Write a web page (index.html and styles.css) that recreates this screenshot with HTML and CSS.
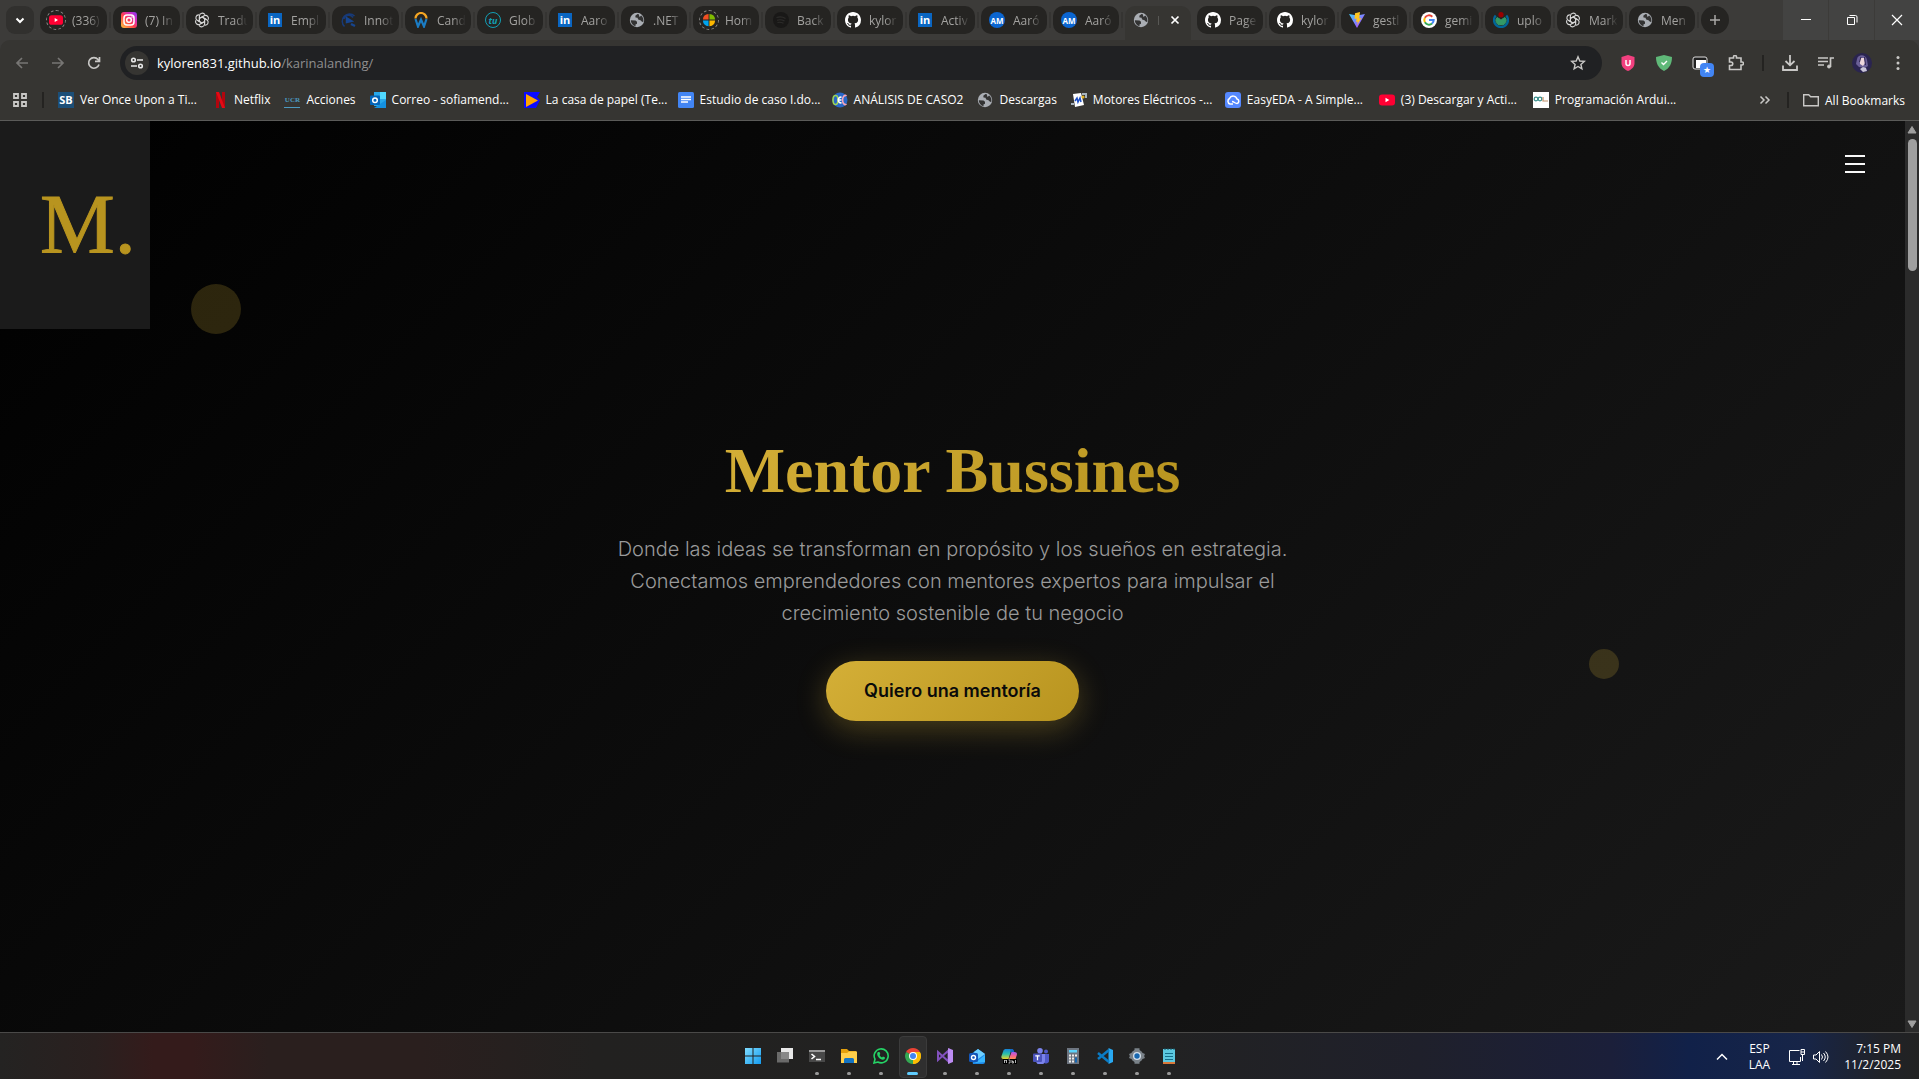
FILE: index.html
```
<!DOCTYPE html>
<html lang="es">
<head>
    <meta charset="UTF-8">
    <meta name="viewport" content="width=device-width, initial-scale=1.0">
    <title>Mentor Bussines</title>
    <link rel="stylesheet" href="styles.css">
</head>
<body>
    <!-- Shared icons -->
    <svg class="sprite" aria-hidden="true">
        <symbol id="i-globe" viewBox="0 0 16 16"><circle cx="8" cy="8" r="7.200" fill="#a9adb3"/><path d="M1.800 8.200l4.700.3 1.500 1.300v2l-1.500.7v1.800C3.800 13.500 1.800 11 1.800 8.200zM8.500 2L6.300 3.800l.2 1.700 2 .3.7 1.700 2.300.8 1.500 1.500 1.200.2c.7-2.500-.2-5-2-6.500L10.500 5 9.800 2.300z" fill="#333"/></symbol>
        <symbol id="i-github" viewBox="0 0 16 16"><path fill="#fff" d="M8 0C3.580 0 0 3.580 0 8c0 3.540 2.290 6.530 5.470 7.590.4.070.55-.17.55-.38v-1.490c-2.010.37-2.530-.49-2.690-.94-.09-.23-.48-.94-.82-1.130-.28-.15-.68-.52-.01-.53.63-.01 1.080.58 1.230.82.72 1.210 1.870.87 2.330.66.070-.52.28-.87.51-1.070-1.780-.2-3.640-.89-3.640-3.950 0-.87.310-1.590.82-2.150-.08-.2-.36-1.020.08-2.120 0 0 .67-.21 2.200.82a7.600 7.600 0 0 1 4 0c1.530-1.040 2.200-.82 2.200-.82.44 1.100.16 1.920.08 2.120.51.56.82 1.270.82 2.150 0 3.070-1.870 3.750-3.650 3.950.29.25.54.73.54 1.480v2.200c0 .21.150.46.55.38A8 8 0 0 0 16 8c0-4.420-3.580-8-8-8z"/></symbol>
        <symbol id="i-gpt" viewBox="0 0 16 16"><g fill="none" stroke="#d8d8d8" stroke-width="1.100"><path id="petal" d="M5.400 8.500V4a2.900 2.900 0 0 1 5.500-1.200M5.400 6.500l4-2.300"/><path d="M5.400 8.500V4a2.900 2.900 0 0 1 5.500-1.200M5.400 6.500l4-2.300" transform="rotate(60 8 8)"/><path d="M5.400 8.500V4a2.900 2.900 0 0 1 5.500-1.200M5.400 6.500l4-2.300" transform="rotate(120 8 8)"/><path d="M5.400 8.500V4a2.900 2.900 0 0 1 5.500-1.200M5.400 6.500l4-2.300" transform="rotate(180 8 8)"/><path d="M5.400 8.500V4a2.900 2.900 0 0 1 5.500-1.200M5.400 6.500l4-2.300" transform="rotate(240 8 8)"/><path d="M5.400 8.500V4a2.900 2.900 0 0 1 5.500-1.200M5.400 6.500l4-2.300" transform="rotate(300 8 8)"/></g></symbol>
        <symbol id="i-youtube" viewBox="0 0 16 16"><rect y="2.500" width="16" height="11" rx="3" fill="#ff0033"/><path d="M6.500 5.800v4.400L10.300 8z" fill="#fff"/></symbol>
    </svg>

    <header class="browser">
        <div class="tab-strip">
            <button class="tab-search" aria-label="Search tabs"><svg width="16" height="16" viewBox="0 0 16 16"><path d="M4.500 6.500L8 10l3.500-3.500" fill="none" stroke="#fff" stroke-width="2"/></svg></button>
            <div class="tabs">
                <button class="tab"><span class="fav ring"><svg><use href="#i-youtube"/></svg></span><span class="tab-title">(336)</span></button>
                <button class="tab"><span class="fav fav-insta"><svg viewBox="0 0 16 16"><g fill="none" stroke="#fff" stroke-width="1.500"><rect x="3" y="3" width="10" height="10" rx="3"/><circle cx="8" cy="8" r="2.300"/></g><circle cx="11" cy="5" r=".8" fill="#fff"/></svg></span><span class="tab-title">(7) In</span></button>
                <button class="tab"><span class="fav"><svg><use href="#i-gpt"/></svg></span><span class="tab-title">Tradu</span></button>
                <button class="tab"><span class="fav fav-in">in</span><span class="tab-title">Empl</span></button>
                <button class="tab"><span class="fav"><svg viewBox="0 0 16 16"><path d="M14.500 4A7 7 0 1 0 4.500 14.500M13 5.500A5 5 0 0 0 4 7" fill="none" stroke="#173a78" stroke-width="1.500"/><path d="M7 6.500l4 2.500-4 1zM11 12l4 2" fill="none" stroke="#17458e" stroke-width="2.500"/></svg></span><span class="tab-title">Innot</span></button>
                <button class="tab"><span class="fav"><svg viewBox="0 0 16 16"><path d="M2.500 6.500a5.500 5.500 0 0 1 11 0" fill="none" stroke="#f5a623" stroke-width="2.200"/><path d="M2.500 7l2.500 7.500 3-7 3 7L13.500 7" fill="none" stroke="#1b7cc4" stroke-width="2.200"/></svg></span><span class="tab-title">Cand</span></button>
                <button class="tab"><span class="fav fav-tu">tu</span><span class="tab-title">Glob</span></button>
                <button class="tab"><span class="fav fav-in">in</span><span class="tab-title">Aaro</span></button>
                <button class="tab"><span class="fav"><svg><use href="#i-globe"/></svg></span><span class="tab-title">.NET</span></button>
                <button class="tab"><span class="fav ring"><svg viewBox="0 0 16 16"><path d="M7.500 1v6.500H1A7 7 0 0 1 7.500 1z" fill="#f25022"/><path d="M8.500 1v6.500H15A7 7 0 0 0 8.500 1z" fill="#7fba00"/><path d="M7.500 15V8.500H1A7 7 0 0 0 7.500 15z" fill="#00a4ef"/><path d="M8.500 15V8.500H15A7 7 0 0 1 8.500 15z" fill="#ffb900"/></svg></span><span class="tab-title">Hom</span></button>
                <button class="tab"><span class="fav"><svg viewBox="0 0 16 16"><circle cx="8" cy="8" r="8" fill="#191817"/><path d="M3.500 5.500q5-1.500 9 1M4 8.200q4-1.200 7.500.8M4.500 10.500q3-.8 6 .8" fill="none" stroke="#2d2c2a" stroke-width="1.200"/></svg></span><span class="tab-title">Back</span></button>
                <button class="tab"><span class="fav"><svg><use href="#i-github"/></svg></span><span class="tab-title">kylor</span></button>
                <button class="tab"><span class="fav fav-in">in</span><span class="tab-title">Activ</span></button>
                <button class="tab"><span class="fav fav-am">AM</span><span class="tab-title">Aaró</span></button>
                <button class="tab"><span class="fav fav-am">AM</span><span class="tab-title">Aaró</span></button>
                <div class="tab active"><span class="fav"><svg><use href="#i-globe"/></svg></span><span class="tab-title">M</span><button class="tab-close" aria-label="Close tab"><svg width="16" height="16" viewBox="0 0 16 16"><path d="M4.500 4.500l7 7M11.500 4.500l-7 7" stroke="#fff" stroke-width="1.700"/></svg></button></div>
                <button class="tab"><span class="fav"><svg><use href="#i-github"/></svg></span><span class="tab-title">Page</span></button>
                <button class="tab"><span class="fav"><svg><use href="#i-github"/></svg></span><span class="tab-title">kylor</span></button>
                <button class="tab"><span class="fav"><svg viewBox="0 0 16 16"><defs><linearGradient id="vite" x1="0" y1="0" x2="1" y2="1"><stop stop-color="#41d1ff"/><stop offset="1" stop-color="#bd34fe"/></linearGradient></defs><path d="M0 2l8 14 8-14-8 1.500z" fill="url(#vite)"/><path d="M11 0L6 1.200 5.500 7l2.200-.5L7 10l1.800-.6L8 13l4.500-7-2.300.5z" fill="#ffc620"/></svg></span><span class="tab-title">gestl</span></button>
                <button class="tab"><span class="fav"><svg viewBox="0 0 16 16"><circle cx="8" cy="8" r="8" fill="#fff"/><g fill="none" stroke-width="2"><path d="M11.300 4.700A4.700 4.700 0 0 0 3.900 5.700" stroke="#ea4335"/><path d="M3.900 5.700a4.700 4.700 0 0 0 0 4.600" stroke="#fbbc05"/><path d="M3.900 10.300a4.700 4.700 0 0 0 7.100 1.300" stroke="#34a853"/><path d="M11 11.600A4.700 4.700 0 0 0 12.700 8H8" stroke="#4285f4"/></g></svg></span><span class="tab-title">gemi</span></button>
                <button class="tab"><span class="fav"><svg viewBox="0 0 16 16"><path d="M2.700 3.500a7 7 0 1 0 10.600 0" fill="none" stroke="#069" stroke-width="2.300"/><path d="M4 5.500l3.500 2v5.500A4.500 4.500 0 0 1 4 5.500zM12 5.500l-3.500 2v5.500A4.500 4.500 0 0 0 12 5.500z" fill="#396" stroke="#396"/><circle cx="8" cy="2.700" r="2.600" fill="#900"/></svg></span><span class="tab-title">uplo</span></button>
                <button class="tab"><span class="fav"><svg><use href="#i-gpt"/></svg></span><span class="tab-title">Mark</span></button>
                <button class="tab"><span class="fav"><svg><use href="#i-globe"/></svg></span><span class="tab-title">Men</span></button>
            </div>
            <button class="new-tab" aria-label="New tab"><svg width="16" height="16" viewBox="0 0 16 16"><path d="M8 3v10M3 8h10" stroke="#a9a8a6" stroke-width="1.500"/></svg></button>
            <div class="window-controls">
                <button aria-label="Minimize"><svg viewBox="0 0 12 12"><path d="M1 5.500h10" stroke="#fff"/></svg></button>
                <button aria-label="Restore"><svg viewBox="0 0 12 12"><path d="M3.500 1.500h6a1.500 1.500 0 0 1 1.500 1.500v5.500M1.500 3.500h7v7h-7z" fill="none" stroke="#fff"/></svg></button>
                <button aria-label="Close"><svg viewBox="0 0 12 12"><path d="M1 1l10 10M11 1L1 11" stroke="#fff" stroke-width="1.200"/></svg></button>
            </div>
        </div>

        <div class="toolbar">
            <button class="tool dim" aria-label="Back"><svg viewBox="0 0 16 16"><path d="M14 8H3M8 3L3 8l5 5" stroke-width="1.700"/></svg></button>
            <button class="tool dim" aria-label="Forward"><svg viewBox="0 0 16 16"><path d="M2 8h11M8 3l5 5-5 5" stroke-width="1.700"/></svg></button>
            <button class="tool" aria-label="Reload"><svg viewBox="0 0 16 16"><path d="M13 9.500A5.300 5.300 0 1 1 12 4.500l1.300 1.300M13.500 2v4.300H9" stroke-width="1.700"/></svg></button>
            <div class="omnibox">
                <button class="site-info" aria-label="Site information"><svg width="14" height="14" viewBox="0 0 14 14"><g fill="none" stroke="#e8e8e8" stroke-width="1.600"><circle cx="3.500" cy="4" r="1.800"/><path d="M7 4h6M1 10h6"/><circle cx="10.500" cy="10" r="1.800"/></g></svg></button>
                <span class="url" role="textbox" aria-label="Address">kyloren831.github.io<span class="path">/karinalanding/</span></span>
                <button class="tool star" aria-label="Bookmark"><svg viewBox="0 0 16 16"><path d="M8 1.800l1.800 4.200 4.500.4-3.400 3 1 4.400L8 11.500l-3.900 2.300 1-4.400-3.400-3 4.500-.4z" stroke-width="1.400"/></svg></button>
            </div>
            <div class="extensions">
                <button class="tool" aria-label="uBlock"><svg viewBox="0 0 16 16"><path d="M8 0l6.500 2v6c0 4-3 6.500-6.500 8C4.500 14.500 1.500 12 1.500 8V2z" fill="#f2407f" stroke="none"/><path d="M6 5v3.500a2 2 0 0 0 4 0V5" stroke="#fff" stroke-width="1.500"/></svg></button>
                <button class="tool" aria-label="AdGuard"><svg viewBox="0 0 16 16"><path d="M8 0l8 2c0 6-2 11-8 14C2 13 0 8 0 2z" fill="#5fb878" stroke="none"/><path d="M5.500 7.500l2 2L11 6" stroke="#fff" stroke-width="1.400"/></svg></button>
                <button class="tool badged" aria-label="Window extension"><svg viewBox="0 0 16 16"><rect x="1" y="2" width="14" height="12" rx="2" fill="#222" stroke="#ddd"/><path d="M4 5h10v8H4z" fill="#fff" stroke="none"/></svg><span class="badge">★</span></button>
                <button class="tool" aria-label="Extensions"><svg viewBox="0 0 16 16"><path d="M1.500 3h4V2a1.500 1.500 0 0 1 3 0v1H13v4h1a1.500 1.500 0 0 1 0 3h-1v4.500H1.500v-4H3a1.500 1.500 0 0 0 0-3.500H1.500z" stroke-width="1.600"/></svg></button>
                <span class="sep"></span>
                <button class="tool" aria-label="Downloads"><svg viewBox="0 0 16 16"><path d="M8 0v10M3.500 6L8 10.300 12.500 6M1 10.500V15h14v-4.500" stroke-width="1.800"/></svg></button>
                <button class="tool" aria-label="Media"><svg viewBox="0 0 16 16"><path d="M0 3h10M0 6.500h10M0 10h6M12.500 12V3H16" stroke-width="1.700"/><circle cx="11" cy="11.500" r="1.500" fill="#c9c8c6"/></svg></button>
                <button class="tool" aria-label="Profile"><svg class="avatar" viewBox="0 0 20 20"><circle cx="10" cy="10" r="10" fill="#2a2450" stroke="none"/><path d="M5 6c1-5 9-5 10 1l1 6-3 2-6-1-3-3z" fill="#6a5f96" stroke="none"/><path d="M8 5h4l1 5-2 3-3-2z" fill="#edd7dc" stroke="none"/><path d="M8 16l3-2 3 1 1 3-4 1z" fill="#c9c5d8" stroke="none"/><path d="M9 4L7.500 9M12.500 4l1 8" stroke="#30254f"/></svg></button>
                <button class="tool" aria-label="Menu"><svg viewBox="0 0 16 16"><g fill="#c9c8c6" stroke="none"><circle cx="8" cy="2.500" r="1.500"/><circle cx="8" cy="8" r="1.500"/><circle cx="8" cy="13.500" r="1.500"/></g></svg></button>
            </div>
        </div>

        <nav class="bookmarks" aria-label="Bookmarks">
            <button class="apps" aria-label="Apps"><svg width="16" height="16" viewBox="0 0 16 16"><path d="M2 2h4v4H2zM10 2h4v4h-4zM2 10h4v4H2zM10 10h4v4h-4z" fill="none" stroke="#c9c8c6" stroke-width="1.800"/></svg></button>
            <span class="sep"></span>
            <div class="bookmark-list">
                <a href="#" class="cut"><span class="fav fav-sb">SB</span><span>Ver Once Upon a Ti...</span></a>
                <a href="#"><span class="fav"><svg viewBox="0 0 16 16"><path d="M4 0h3v16H4zM10 0h3v16h-3z" fill="#b1060f"/><path d="M4 0h3l6 16h-3z" fill="#e50914"/></svg></span><span>Netflix</span></a>
                <a href="#"><span class="fav fav-ucr">UCR</span><span>Acciones</span></a>
                <a href="#" class="cut"><span class="fav"><svg viewBox="0 0 16 16"><path d="M4 0h12v14H4z" fill="#28a8ea"/><path d="M10 0h6v7h-6z" fill="#50d9ff"/><path d="M4 16h12V8l-6 4z" fill="#1490df"/><rect y="3.500" width="10" height="9.500" rx="1" fill="#0364b8"/><circle cx="5" cy="8.200" r="2.300" fill="none" stroke="#fff" stroke-width="1.500"/></svg></span><span>Correo - sofiamend...</span></a>
                <a href="#" class="cut"><span class="fav"><svg viewBox="0 0 16 16"><path d="M0 0h16l-3 5 3 3-4 8H0z" fill="#0b0bff"/><path d="M2 2l12 6.500L2 15z" fill="#ffa500"/></svg></span><span>La casa de papel (Te...</span></a>
                <a href="#" class="cut"><span class="fav"><svg viewBox="0 0 16 16"><rect width="16" height="16" rx="1.500" fill="#4285f4"/><path d="M3 5h10M3 7.500h10M3 10h7" stroke="#fff" stroke-width="1.300"/></svg></span><span>Estudio de caso I.do...</span></a>
                <a href="#"><span class="fav"><svg viewBox="0 0 16 16"><circle cx="8" cy="8" r="7.500" fill="#2867c8"/><g fill="none" stroke-width="1.600"><ellipse cx="3.500" cy="8" rx="2.500" ry="4.500" stroke="#9bd35a"/><path d="M9.500 5.500a2.200 2.800 0 1 0 0 5M6.500 8h3" stroke="#fff"/><path d="M14.500 4a2.700 4.500 0 1 0 0 8" stroke="#f6a5bb"/></g></svg></span><span>ANÁLISIS DE CASO2</span></a>
                <a href="#"><span class="fav"><svg><use href="#i-globe"/></svg></span><span>Descargas</span></a>
                <a href="#" class="cut"><span class="fav"><svg viewBox="0 0 16 16"><path d="M2 2l8-1 3 12-9 2z" fill="#fff"/><path d="M4 9l2-3 1 4 2-4 1 4" fill="none" stroke="#1d4fc4" stroke-width="1.500"/><path d="M11 2h4v4M0 12h3" stroke="#a7b4bf" stroke-width="2" fill="none"/><circle cx="12" cy="5" r="1.600" fill="#e6b422"/></svg></span><span>Motores Eléctricos -...</span></a>
                <a href="#" class="cut"><span class="fav"><svg viewBox="0 0 16 16"><rect width="16" height="16" rx="3" fill="#5588ff"/><path d="M8 12H5a3 3 0 0 1-.5-5.500 4 4 0 0 1 7.500.5 2.300 2.300 0 0 1 0 4.500c-2 0-3-2-5-2" fill="none" stroke="#fff" stroke-width="1.500"/></svg></span><span>EasyEDA - A Simple...</span></a>
                <a href="#" class="cut"><span class="fav"><svg><use href="#i-youtube"/></svg></span><span>(3) Descargar y Acti...</span></a>
                <a href="#" class="cut"><span class="fav"><svg viewBox="0 0 16 16"><path d="M0 0h16v16H0z" fill="#fff"/><g fill="none" stroke="#3a8f8c" stroke-width="1.200"><circle cx="3" cy="7" r="1.800"/><circle cx="7" cy="7" r="1.800"/><path d="M10 5v4h5" stroke="#c09068"/></g></svg></span><span>Programación Ardui...</span></a>
            </div>
            <button class="more" aria-label="More bookmarks"><svg width="16" height="16" viewBox="0 0 16 16"><path d="M3.500 4.500L7 8l-3.500 3.500M8.500 4.500L12 8l-3.500 3.500" fill="none" stroke="#c9c8c6" stroke-width="1.500"/></svg></button>
            <span class="sep"></span>
            <button class="all-bookmarks"><svg width="16" height="16" viewBox="0 0 16 16"><path d="M.7 2.700h5l2 2h7.600v9H.7z" fill="none" stroke="#c9c8c6" stroke-width="1.400"/></svg>All Bookmarks</button>
        </nav>
    </header>

    <div class="viewport">
        <main class="hero">
            <div class="logo">M.</div>
            <button class="menu-toggle" aria-label="Abrir menú"><span></span><span></span><span></span></button>
            <div class="floating one"></div>
            <div class="floating two"></div>
            <div class="hero-content">
                <h1>Mentor Bussines</h1>
                <p>Donde las ideas se transforman en propósito y los sueños en estrategia. Conectamos emprendedores con mentores expertos para impulsar el crecimiento sostenible de tu negocio</p>
                <button class="cta">Quiero una mentoría</button>
            </div>
        </main>
        <div class="scrollbar">
            <svg width="10" height="8" viewBox="0 0 10 8"><path d="M5 .5L9 7H1z" fill="#9f9f9f" stroke="#9f9f9f" stroke-linejoin="round"/></svg>
            <div class="thumb"></div>
            <svg width="10" height="8" viewBox="0 0 10 8"><path d="M5 7.500L9 1H1z" fill="#9f9f9f" stroke="#9f9f9f" stroke-linejoin="round"/></svg>
        </div>
    </div>

    <footer class="taskbar">
        <div class="task-apps">
            <button class="app" aria-label="Inicio"><svg viewBox="0 0 16 16"><defs><linearGradient id="win" x1="0" y1="0" x2="1" y2="1"><stop stop-color="#7fdcff"/><stop offset="1" stop-color="#149cf0"/></linearGradient></defs><path d="M0 0h7.500v7.500H0zM8.500 0H16v7.500H8.500zM0 8.500h7.500V16H0zM8.500 8.500H16V16H8.500z" fill="url(#win)"/></svg></button>
            <button class="app" aria-label="Vista de tareas"><svg viewBox="0 0 16 16"><path d="M4 0h12v11H4z" fill="#e8e8e8"/><path d="M0 4h12v10.500H0z" fill="#777" opacity=".85"/></svg></button>
            <button class="app open" aria-label="Terminal"><svg viewBox="0 0 16 16"><path d="M0 2h16v12H0z" fill="#484848"/><path d="M0 2h16v2H0z" fill="#999"/><path d="M2.500 6l3 2.500-3 2.500M7 11.500h5" fill="none" stroke="#fff" stroke-width="1.600"/></svg></button>
            <button class="app open" aria-label="Explorador"><svg viewBox="0 0 16 16"><path d="M0 1h6l2 2h7v5H0z" fill="#e4a00d"/><path d="M0 5h6l2-1.500h8V15H0z" fill="#ffce4a"/><path d="M3 15v-3.500A1.500 1.500 0 0 1 4.500 10h7a1.500 1.500 0 0 1 1.500 1.500V15z" fill="#1474c4"/></svg></button>
            <button class="app open" aria-label="WhatsApp"><svg viewBox="0 0 16 16"><path d="M1 15l1-3.800A7 7 0 1 1 4.800 14z" fill="none" stroke="#25d366" stroke-width="1.600"/><path d="M5 4l1.500 0 .8 2-.8 1c.6 1.300 1.300 2 2.500 2.500l1-1 2 1c0 1.500-1 2.300-2.300 2.200C7 11.300 4.300 8.500 4.200 6 4.200 5 4.500 4.500 5 4z" fill="#25d366"/></svg></button>
            <button class="app open current" aria-label="Chrome"><svg viewBox="0 0 16 16"><path d="M8 8L1.100 4A8 8 0 0 1 14.900 4z" fill="#ea4335"/><path d="M8 8l6.900-4A8 8 0 0 1 8 16z" fill="#fbbc05"/><path d="M8 8v8A8 8 0 0 1 1.100 4z" fill="#34a853"/><path d="M8 4h6.900A8 8 0 0 1 8 16l3.500-6z" fill="#fbbc05"/><circle cx="8" cy="8" r="4" fill="#fff"/><circle cx="8" cy="8" r="3" fill="#4285f4"/></svg></button>
            <button class="app open" aria-label="Visual Studio"><svg viewBox="0 0 16 16"><path d="M1 4v8l10.500-9.500v11L1 4z" fill="none" stroke="#8251bd" stroke-width="2"/><path d="M11 0l5 2v12l-5 2z" fill="#bd8cf3"/></svg></button>
            <button class="app open" aria-label="Outlook"><svg viewBox="0 0 16 16"><path d="M2 6l7-5 7 5v8a2 2 0 0 1-2 2H4z" fill="#1e8ae8"/><path d="M5 4l4-3 7 5-7 5z" fill="#6fd0ff"/><path d="M6 15L16 7v7z" fill="#38b6ff"/><rect y="5" width="9" height="9" rx="1.500" fill="#1356b8"/><circle cx="4.500" cy="9.500" r="2" fill="none" stroke="#fff" stroke-width="1.400"/></svg></button>
            <button class="app open" aria-label="Copilot"><svg viewBox="0 0 16 16"><defs><linearGradient id="cop-a" x1="0" y1="0" x2="0" y2="1"><stop stop-color="#1583d8"/><stop offset=".5" stop-color="#2cc0a8"/><stop offset="1" stop-color="#e8d32c"/></linearGradient><linearGradient id="cop-b" x1="0" y1="0" x2="0" y2="1"><stop stop-color="#a259f0"/><stop offset=".5" stop-color="#ee5f9a"/><stop offset="1" stop-color="#ff8f4d"/></linearGradient></defs><path d="M5 1h5.500L7.500 11H2.500C.5 11 0 9.500.5 8l2-5.500C3 1.500 3.700 1 5 1z" fill="url(#cop-a)"/><path d="M10.500 4h3c2 0 2.800 1.200 2.300 3L14.500 11H8z" fill="url(#cop-b)"/><path d="M9 1h2c1 0 1.500.6 1.800 1.500L13.200 4H10z" fill="#1668c4"/><path d="M2 11h14v5H2z" fill="#000"/><path d="M3.500 15v-3l1 1 1-1v3M7.500 12H9v3H7.500M11 12v3h1.500v-1.500H11M14.500 12v3" fill="none" stroke="#ddd" stroke-width=".8"/></svg></button>
            <button class="app open" aria-label="Teams"><svg viewBox="0 0 16 16"><circle cx="7" cy="2.800" r="2.800" fill="#7b83eb"/><circle cx="13" cy="3.500" r="2" fill="#5059c9"/><path d="M9 6h7v6a3 3 0 0 1-6 1z" fill="#5059c9"/><path d="M2 6h10v6a4.500 4.500 0 0 1-9 1z" fill="#7b83eb"/><rect y="5.500" width="9" height="8.500" rx="1" fill="#4b53bc"/><path d="M2.300 7.800h4.400M4.500 7.800v4.500" stroke="#fff" stroke-width="1.300"/></svg></button>
            <button class="app open" aria-label="Calculadora"><svg viewBox="0 0 16 16"><path d="M2 0h12v16H2z" fill="#6d7580"/><path d="M4 2h8v2.500H4z" fill="#5cd2fa"/><path d="M4 6.500h2v2H4zM7 6.500h2v2H7zM10 6.500h2v2h-2zM4 9.500h2v2H4zM7 9.500h2v2H7zM4 12.500h2v2H4zM7 12.500h2v2H7z" fill="#eee"/><path d="M10 9.500h2v5h-2z" fill="#1767b0"/></svg></button>
            <button class="app open" aria-label="VS Code"><svg viewBox="0 0 16 16"><path d="M11.500 0L16 2v12l-4.500 2z" fill="#29a9f2"/><path d="M1 5l11 9M1 11l11-9" stroke="#0b7bc4" stroke-width="2.500"/></svg></button>
            <button class="app open" aria-label="Configuración"><svg viewBox="0 0 16 16"><circle cx="8" cy="8" r="5" fill="none" stroke="#7a8289" stroke-width="3"/><path d="M5.500 1.500h5M5.500 14.500h5M1.200 5.500l2 5M14.800 5.500l-2 5M1.200 10.500l2-5M14.800 10.500l-2-5" stroke="#7a8289" stroke-width="2.500"/><circle cx="8" cy="8" r="4" fill="#d7e3ee"/><circle cx="8" cy="8" r="2.700" fill="#1767b0"/></svg></button>
            <button class="app open" aria-label="Bloc de notas"><svg viewBox="0 0 16 16"><path d="M2 1h12v14H2z" fill="#5cc8e0"/><path d="M2 14h12v2H2z" fill="#d8783a"/><path d="M4 5.500h8M4 8.500h8M4 11.500h8" stroke="#14708c" stroke-width="1.200"/><path d="M4 0v2M7 0v2M10 0v2M13 0v2" stroke="#14505f"/></svg></button>
        </div>
        <div class="tray">
            <button class="tray-more" aria-label="Mostrar iconos ocultos"><svg width="12" height="12" viewBox="0 0 12 12"><path d="M1 8.500l5-5 5 5" fill="none" stroke="#fff" stroke-width="1.500"/></svg></button>
            <button class="lang">ESP<br>LAA</button>
            <button class="status" aria-label="Red y volumen">
                <svg width="16" height="16" viewBox="0 0 16 16"><path d="M10.500 1.500H.5v11h11V8M3 15.500h8M4.500 12.500v3M8 12.500v3M12 .5h3.500v5H12zM12 3h3.500M13.500 6v6" fill="none" stroke="#fff"/></svg>
                <svg width="16" height="16" viewBox="0 0 16 16"><path d="M.5 6v4h2.500l3.500 3.500v-11L3 6zM8.500 5.500q2 2.500 0 5M10.500 4q3.500 4 0 8M12.500 2.500q5 5.500 0 11" fill="none" stroke="#fff"/></svg>
            </button>
            <button class="clock">7:15 PM<br>11/2/2025</button>
        </div>
    </footer>
</body>
</html>
```
FILE: styles.css
```
* {
    box-sizing: border-box;
}
body {
    margin: 0;
    height: 100vh;
    display: flex;
    flex-direction: column;
    overflow: hidden;
    background: #000;
    color: #fff;
    font-family: "Open Sans", "Noto Sans", sans-serif;
    font-size: 12px;
}
button {
    margin: 0;
    padding: 0;
    border: none;
    background: none;
    color: inherit;
    font: inherit;
    cursor: pointer;
}
a {
    color: inherit;
    text-decoration: none;
}
svg {
    display: block;
    flex: none;
}
.sprite {
    display: none;
}

/* Tab strip */
.browser {
    background: #3c3b39;
    border-bottom: 1px solid #5b5b59;
}
.tab-strip {
    display: flex;
    align-items: center;
    height: 40px;
    padding-left: 6px;
}
.tab-search {
    display: grid;
    place-items: center;
    width: 28px;
    height: 28px;
    margin-right: 6px;
    border-radius: 9px;
    background: #31302e;
}
.tabs {
    display: flex;
    flex: 1;
    gap: 6px;
    min-width: 0;
}
.tab {
    position: relative;
    display: flex;
    flex: 1 1 16px;
    align-items: center;
    gap: 8px;
    min-width: 0;
    height: 28px;
    padding: 0 2px 0 8px;
    border-radius: 10px;
    background: #252422;
    color: #a3a2a0;
    text-align: left;
}
/* spare pixels go to the first tabs */
.tab:nth-child(-n+5) {
    flex-basis: 17px;
}
.tab::after {
    content: "";
    position: absolute;
    right: -4px;
    top: 6px;
    width: 2px;
    height: 16px;
    background: #353432;
}
.tab.active {
    align-self: flex-end;
    height: 34px;
    margin-bottom: -6px;
    padding: 0 8px 6px;
    border-radius: 10px 10px 0 0;
    background: #363532;
}
.tab.active::after {
    display: none;
}
.tab-title {
    flex: 1;
    min-width: 0;
    overflow: hidden;
    white-space: nowrap;
    -webkit-mask-image: linear-gradient(to right, #000 50%, transparent 90%);
    mask-image: linear-gradient(to right, #000 50%, transparent 90%);
}
.tab-close {
    flex: none;
}
.fav {
    display: grid;
    flex: none;
    place-items: center;
    width: 16px;
    height: 16px;
    color: #fff;
    font-weight: bold;
}
.fav svg {
    width: 16px;
    height: 16px;
}
.ring {
    border-radius: 50%;
    outline: 1px dashed #8d8c8a;
    outline-offset: 1px;
}
.ring svg {
    width: 14px;
    height: 14px;
}
.fav-insta {
    border-radius: 3px;
    background: linear-gradient(45deg, #ffc83d, #ff3d4a 45%, #d02bc8 75%, #7a3df0);
}
.fav-in {
    width: 14px;
    height: 14px;
    margin: 0 1px;
    background: #0a66c2;
    font-size: 11px;
    line-height: 14px;
}
.fav-tu {
    border: 1px solid #12a0b5;
    border-radius: 50%;
    color: #12a0b5;
    font-size: 9px;
    font-style: italic;
}
.fav-am {
    border-radius: 50%;
    background: #0b65d0;
    font-size: 8px;
}
.fav-sb {
    background: #1c4f78;
    font-size: 11px;
    line-height: 16px;
}
.fav-ucr {
    border-bottom: 1px solid #4d9ac0;
    color: #4d9ac0;
    font-family: "Liberation Serif", serif;
    font-size: 7px;
}
.new-tab {
    display: grid;
    place-items: center;
    width: 28px;
    height: 28px;
    margin: 0 54px 0 6px;
    border-radius: 50%;
    background: #252422;
}
.window-controls {
    display: grid;
    grid-template-columns: 45px 45px 44px;
    gap: 1px;
    align-self: stretch;
}
.window-controls button {
    display: grid;
    place-items: center;
    background: #434342;
}
.window-controls svg {
    width: 12px;
    height: 12px;
}

/* Toolbar */
.toolbar {
    display: flex;
    align-items: center;
    height: 40px;
    padding: 6px 3px 0 4px;
    border-radius: 10px 10px 0 0;
    background: #363532;
}
.tool {
    position: relative;
    display: grid;
    flex: none;
    place-items: center;
    width: 36px;
    height: 34px;
    color: #c9c8c6;
}
.tool svg {
    width: 16px;
    height: 16px;
    fill: none;
    stroke: currentColor;
}
.tool.dim {
    color: #777674;
}
.tool .avatar {
    width: 20px;
    height: 20px;
}
.omnibox {
    display: flex;
    flex: 1;
    align-items: center;
    height: 34px;
    margin-left: 8px;
    padding: 0 6px 0 5px;
    border-radius: 17px;
    background: #202123;
}
.site-info {
    display: grid;
    place-items: center;
    width: 24px;
    height: 24px;
    border-radius: 50%;
    background: #363532;
}
.url {
    flex: 1;
    margin-left: 8px;
    font-size: 13px;
}
.path {
    color: #8f8f8f;
}
.extensions {
    display: flex;
    align-items: center;
    margin-left: 8px;
}
.badge {
    position: absolute;
    right: 4px;
    bottom: 3px;
    width: 14px;
    height: 14px;
    border-radius: 4px;
    background: #4285f4;
    color: #fff;
    font-size: 9px;
    line-height: 14px;
    text-align: center;
}
.sep {
    flex: none;
    width: 2px;
    height: 16px;
    background: #242321;
}
.extensions .sep {
    margin: 0 8px;
}

/* Bookmarks bar */
.bookmarks {
    display: flex;
    align-items: center;
    height: 40px;
    padding: 0 14px 0 12px;
    background: #363532;
}
.apps {
    margin-right: 14px;
}
.bookmark-list {
    display: flex;
    flex: 1;
    gap: 14px;
    min-width: 0;
    margin-left: 14px;
}
.bookmark-list a {
    display: flex;
    flex: none;
    align-items: center;
    gap: 6px;
    line-height: 16px;
    white-space: nowrap;
}
.bookmark-list .cut {
    width: 140px;
}
.more {
    margin-right: 14px;
}
.all-bookmarks {
    display: flex;
    align-items: center;
    gap: 6px;
    margin-left: 14px;
}

/* Landing page */
.viewport {
    display: flex;
    flex: 1;
    min-height: 0;
}
.hero {
    position: relative;
    display: flex;
    flex: 1;
    align-items: center;
    justify-content: center;
    background: linear-gradient(135deg, #000 0%, #1a1a1a 100%);
    font-family: Inter, sans-serif;
}
.logo {
    position: absolute;
    top: 0;
    left: 0;
    width: 150px;
    height: 208px;
    padding-left: 40px;
    background: #1b1b1b;
    color: #b8941f;
    font-family: "Liberation Serif", serif;
    font-size: 84px;
    line-height: 208px;
    -webkit-text-stroke: 1px #b8941f;
}
.menu-toggle {
    position: absolute;
    top: 34px;
    right: 40px;
    display: grid;
    gap: 6px;
}
.menu-toggle span {
    width: 20px;
    height: 2px;
    background: #f8f8f8;
}
.floating {
    position: absolute;
    border-radius: 50%;
    background: #d4af37;
    opacity: 0.2;
}
.floating.one {
    top: calc(20% - 19px);
    left: 10%;
    width: 50px;
    height: 50px;
}
.floating.two {
    top: 58%;
    right: 15%;
    width: 30px;
    height: 30px;
}
.hero-content {
    display: flex;
    flex-direction: column;
    align-items: center;
    max-width: 700px;
    text-align: center;
}
.hero-content h1 {
    margin: 0 0 24px;
    background: linear-gradient(135deg, #d4af37, #b8941f);
    -webkit-background-clip: text;
    background-clip: text;
    color: transparent;
    font-family: "Liberation Serif", serif;
    font-size: 64px;
    line-height: 76px;
}
.hero-content p {
    margin: 0 0 32px;
    color: #9a9a9a;
    font-size: 20px;
    font-weight: 300;
    line-height: 32px;
}
.cta {
    padding: 0 38px;
    border-radius: 50px;
    background: linear-gradient(135deg, #d4af37, #b8941f);
    box-shadow: 0 8px 30px rgba(212, 175, 55, 0.3);
    color: #0a0a0a;
    font-size: 18px;
    font-weight: 600;
    line-height: 60px;
}
.scrollbar {
    display: flex;
    flex-direction: column;
    align-items: center;
    gap: 5px;
    width: 14px;
    padding: 5px 0 4px;
    background: #2b2b2b;
}
.thumb {
    width: 9px;
    height: 132px;
    margin-bottom: auto;
    border-radius: 5px;
    background: #9f9f9f;
}

/* Taskbar */
.taskbar {
    display: grid;
    grid-template-columns: 1fr auto 1fr;
    height: 47px;
    border-top: 1px solid #4a4948;
    background: linear-gradient(to right, #242322 0%, #2a201f 5%, #341b1b 8%, #341b1b 10%, #2a1f1e 14%, #2a1f1e 22%, #222120 31%, #222222 60%, #1f202b 74%, #1b1f3a 84%, #112149 88%, #172548 94%, #202228 98%, #222 100%);
}
.task-apps {
    grid-column: 2;
    display: flex;
    padding-left: 2px;
}
.app {
    position: relative;
    display: grid;
    place-items: center;
    width: 32px;
    height: 46px;
}
.app svg {
    position: relative;
    width: 16px;
    height: 16px;
}
.app.open::after {
    content: "";
    position: absolute;
    bottom: 4px;
    width: 4px;
    height: 3px;
    border-radius: 2px;
    background: #999;
}
.app.current::before {
    content: "";
    position: absolute;
    top: 3px;
    width: 26px;
    height: 40px;
    border: 1px solid #3b3b3b;
    border-radius: 4px;
    background: #2f2f2f;
}
.app.current::after {
    width: 11px;
    background: #60cdff;
}
.tray {
    display: flex;
    align-items: center;
    justify-content: flex-end;
    padding: 2px 18px 0 0;
    line-height: 16px;
}
.lang {
    margin-left: 21px;
}
.status {
    display: flex;
    gap: 8px;
    margin-left: 19px;
}
.clock {
    margin-left: 15px;
    text-align: right;
}
```
